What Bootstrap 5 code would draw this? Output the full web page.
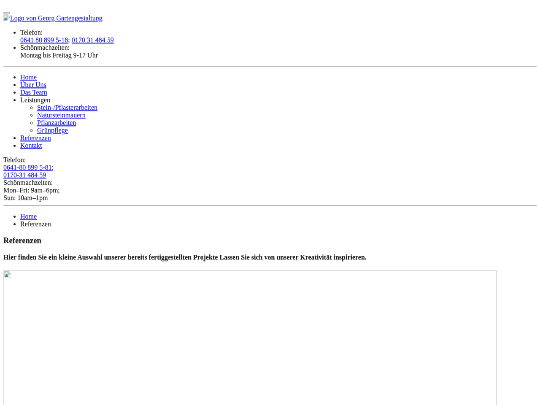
<!DOCTYPE html>
<html lang="de">
<head>
  <meta charset="UTF-8">
  <title>Referenzen</title>
  <link href="https://cdn.jsdelivr.net/npm/bootstrap@5.3.0/dist/css/bootstrap.min.css" rel="stylesheet">
  <style>
    body { background: #fff; }
    .viewport { width: 540px; height: 405px; }
    /* desktop layout, 1280px wide, shown scaled down */
    .page {
      width: 1280px;
      height: 960px;
      padding: 28px 8px 0;
      transform: scale(0.421875);
      transform-origin: 0 0;
      will-change: transform;
      font-family: "Liberation Serif", "Times New Roman", serif;
      font-size: 16px;
      line-height: 18px;
      color: #222;
      background: #fff;
      text-shadow: 0 1px 0 rgba(0, 0, 0, 0.4); /* keeps thin strokes when scaled */
    }
    .page a {
      color: #1a1aee;
      text-shadow: 0 1px 0 rgba(0, 0, 238, 0.4);
      text-decoration-thickness: 2px;
      text-decoration-color: #4d4df2;
    }
    .page ul { padding-left: 40px; margin: 16px 0; }
    .page ul ul { margin: 0; list-style-type: circle; }
    .menu-toggle {
      width: 16px;
      height: 6px;
      border: 2px solid #b8b8b8;
      background: #efefef;
    }
    .logo-link { height: 18px; }
    .broken-icon { width: 16px; height: 16px; flex: none; }
    .rule { height: 2px; margin: 8px 0; background: #b8b8b8; }
    .page-title { font-size: 18.72px; line-height: 21px; margin: 18.72px 0 21.28px; }
    .page-intro { font-size: 16px; line-height: 18px; margin: 21.28px 0; }
    .gallery-image { width: 1170px; height: 878px; border: 2px solid #ddd; }
  </style>
</head>
<body>
  <svg width="0" height="0" class="d-none">
    <symbol id="broken" viewBox="0 0 16 16">
      <path d="M1 1h9l5 5v9H1z" fill="#c6d9f5" stroke="#a5a5a5"/>
      <path d="M10 1v5h5" fill="#fff" stroke="#a5a5a5"/>
      <path d="M2 14v-3l4-4 5 7z" fill="#4ba344"/>
      <path d="M8 15l7-7v7z" fill="#fff"/>
      <circle cx="5" cy="5" r="1.5" fill="#fff"/>
    </symbol>
  </svg>

  <div class="viewport overflow-hidden">
  <div class="page overflow-hidden">
    <header>
      <button type="button" class="menu-toggle d-block p-0" aria-label="Menü"></button>
      <a href="#" class="logo-link d-flex"><svg class="broken-icon"><use href="#broken"/></svg><span>Logo von Georg Gartengestaltung</span></a>
      <ul>
        <li>Telefon:<br><a href="#">0641 80 899 5-18</a>; <a href="#">0170 31 484 59</a></li>
        <li>Schönmachzeiten:<br>Montag bis Freitag 9-17 Uhr</li>
      </ul>
      <div class="rule"></div>
    </header>

    <nav>
      <ul>
        <li><a href="#">Home</a></li>
        <li><a href="#">Über Uns</a></li>
        <li><a href="#">Das Team</a></li>
        <li>Leistungen
          <ul>
            <li><a href="#">Stein-/Pflasterarbeiten</a></li>
            <li><a href="#">Natursteinmauern</a></li>
            <li><a href="#">Pflanzarbeiten</a></li>
            <li><a href="#">Grünpflege</a></li>
          </ul>
        </li>
        <li><a href="#">Referenzen</a></li>
        <li><a href="#">Kontakt</a></li>
      </ul>
    </nav>

    <div>
      Telefon:<br>
      <a href="#">0641-80 899 5-81</a>;<br>
      <a href="#">0170-31 484 59</a><br>
      Schönmachzeiten:<br>
      Mon–Fri: 9am–6pm;<br>
      Sun: 10am–1pm
    </div>
    <div class="rule"></div>

    <ul>
      <li><a href="#">Home</a></li>
      <li>Referenzen</li>
    </ul>

    <main>
      <h3 class="page-title fw-bold">Referenzen</h3>
      <h4 class="page-intro fw-bold">Hier finden Sie ein kleine Auswahl unserer bereits fertiggestellten Projekte Lassen Sie sich von unserer Kreativität inspirieren.</h4>
      <div class="gallery-image d-flex"><svg class="broken-icon"><use href="#broken"/></svg></div>
    </main>
  </div>
  </div>

  <script src="https://cdn.jsdelivr.net/npm/bootstrap@5.3.0/dist/js/bootstrap.bundle.min.js"></script>
</body>
</html>
